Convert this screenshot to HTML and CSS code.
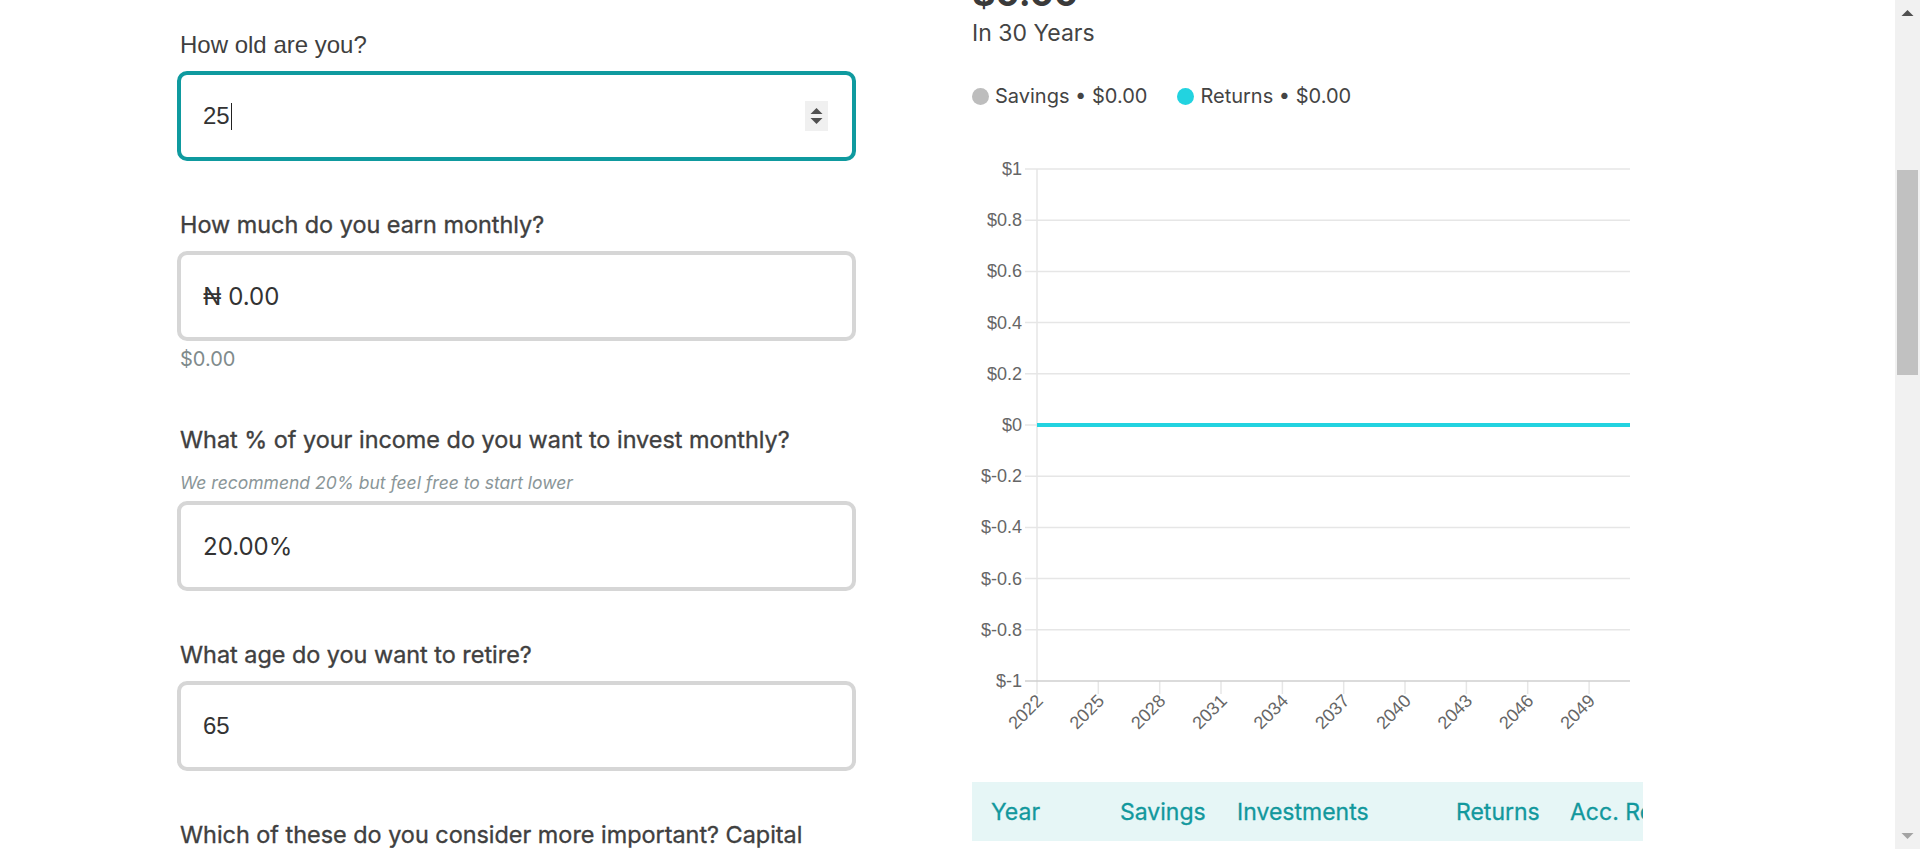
FILE: index.html
```html
<!DOCTYPE html>
<html lang="en">
<head>
<meta charset="utf-8">
<title>Investment Calculator</title>
<link rel="stylesheet" href="styles.css">
</head>
<body>
<div class="window">
  <div class="viewport">
    <main class="calc">
      <section class="form">
        <div class="group">
          <div class="label label-arial">How old are you?</div>
          <div class="field field-focus">
            <span class="value value-arial">25</span><span class="caret"></span>
            <span class="spinner">
              <svg width="23" height="30" viewBox="0 0 23 30"><path d="M5.5 13 L11.5 7 L17.5 13 Z" fill="#505050"/><path d="M5.5 17 L11.5 23 L17.5 17 Z" fill="#505050"/></svg>
            </span>
          </div>
        </div>
        <div class="group">
          <div class="label">How much do you earn monthly?</div>
          <div class="field"><span class="value">₦ 0.00</span></div>
          <div class="helper">$0.00</div>
        </div>
        <div class="group">
          <div class="label">What % of your income do you want to invest monthly?</div>
          <div class="hint">We recommend 20% but feel free to start lower</div>
          <div class="field"><span class="value">20.00%</span></div>
        </div>
        <div class="group">
          <div class="label">What age do you want to retire?</div>
          <div class="field"><span class="value value-arial">65</span></div>
        </div>
        <div class="group">
          <div class="label">Which of these do you consider more important? Capital</div>
        </div>
      </section>

      <section class="results">
        <div class="total">$0.00</div>
        <div class="period">In 30 Years</div>
        <div class="legend">
          <span class="legend-item"><span class="dot dot-savings"></span>Savings • $0.00</span>
          <span class="legend-item"><span class="dot dot-returns"></span>Returns • $0.00</span>
        </div>
        <svg class="chart" width="671" height="600" viewBox="0 0 671 600">
          <g stroke="#e6e6e6" stroke-width="1.5">
            <line x1="53" y1="29" x2="658" y2="29"/>
            <line x1="53" y1="80.2" x2="658" y2="80.2"/>
            <line x1="53" y1="131.4" x2="658" y2="131.4"/>
            <line x1="53" y1="182.6" x2="658" y2="182.6"/>
            <line x1="53" y1="233.8" x2="658" y2="233.8"/>
            <line x1="53" y1="285" x2="658" y2="285"/>
            <line x1="53" y1="336.2" x2="658" y2="336.2"/>
            <line x1="53" y1="387.4" x2="658" y2="387.4"/>
            <line x1="53" y1="438.6" x2="658" y2="438.6"/>
            <line x1="53" y1="489.8" x2="658" y2="489.8"/>
            <line x1="65" y1="29" x2="65" y2="554"/>
            <line x1="126.3" y1="541" x2="126.3" y2="554"/>
            <line x1="187.7" y1="541" x2="187.7" y2="554"/>
            <line x1="249" y1="541" x2="249" y2="554"/>
            <line x1="310.4" y1="541" x2="310.4" y2="554"/>
            <line x1="371.7" y1="541" x2="371.7" y2="554"/>
            <line x1="433" y1="541" x2="433" y2="554"/>
            <line x1="494.4" y1="541" x2="494.4" y2="554"/>
            <line x1="555.7" y1="541" x2="555.7" y2="554"/>
            <line x1="617.1" y1="541" x2="617.1" y2="554"/>
          </g>
          <line x1="53" y1="541" x2="658" y2="541" stroke="#cfcfcf" stroke-width="1.5"/>
          <line x1="65" y1="285" x2="658" y2="285" stroke="#22d3e0" stroke-width="4"/>
          <g class="ylabels" text-anchor="end">
            <text x="50" y="35">$1</text>
            <text x="50" y="86.2">$0.8</text>
            <text x="50" y="137.4">$0.6</text>
            <text x="50" y="188.6">$0.4</text>
            <text x="50" y="239.8">$0.2</text>
            <text x="50" y="291">$0</text>
            <text x="50" y="342.2">$-0.2</text>
            <text x="50" y="393.4">$-0.4</text>
            <text x="50" y="444.6">$-0.6</text>
            <text x="50" y="495.8">$-0.8</text>
            <text x="50" y="547">$-1</text>
          </g>
          <g class="xlabels" text-anchor="end">
            <text transform="translate(72 562) rotate(-45)">2022</text>
            <text transform="translate(133.3 562) rotate(-45)">2025</text>
            <text transform="translate(194.7 562) rotate(-45)">2028</text>
            <text transform="translate(256 562) rotate(-45)">2031</text>
            <text transform="translate(317.4 562) rotate(-45)">2034</text>
            <text transform="translate(378.7 562) rotate(-45)">2037</text>
            <text transform="translate(440 562) rotate(-45)">2040</text>
            <text transform="translate(501.4 562) rotate(-45)">2043</text>
            <text transform="translate(562.7 562) rotate(-45)">2046</text>
            <text transform="translate(624.1 562) rotate(-45)">2049</text>
          </g>
        </svg>
        <div class="table-wrap">
          <table class="breakdown">
            <thead>
              <tr>
                <th class="c-year">Year</th>
                <th class="c-sav">Savings</th>
                <th class="c-inv">Investments</th>
                <th class="c-ret">Returns</th>
                <th class="c-acc">Acc. Returns</th>
              </tr>
            </thead>
          </table>
        </div>
      </section>
    </main>
  </div>
  <div class="scrollbar">
    <div class="sb-btn">
      <svg width="25" height="25" viewBox="0 0 25 25"><path d="M6.5 16 L12.5 10 L18.5 16 Z" fill="#505050"/></svg>
    </div>
    <div class="sb-track"><div class="sb-thumb"></div></div>
    <div class="sb-btn">
      <svg width="25" height="25" viewBox="0 0 25 25"><path d="M6.5 9 L12.5 15 L18.5 9 Z" fill="#a3a3a3"/></svg>
    </div>
  </div>
</div>
</body>
</html>
```
FILE: styles.css
```css
* { box-sizing: border-box; }
html, body {
  margin: 0;
  padding: 0;
  height: 849px;
  overflow: hidden;
  background: #ffffff;
}
body {
  font-family: "Inter", "Liberation Sans", sans-serif;
  color: #404040;
}
.window {
  display: flex;
  height: 849px;
}
.viewport {
  flex: 1;
  overflow: hidden;
}
.calc {
  display: flex;
  gap: 116px;
  padding-left: 177px;
}
.form {
  width: 679px;
  flex: none;
  padding-top: 29px;
  display: flex;
  flex-direction: column;
}
.group {
  display: flex;
  flex-direction: column;
  margin-bottom: 48px;
}
.label {
  font-size: 23.4px;
  line-height: 32px;
  font-weight: 400;
  color: #404040;
  -webkit-text-stroke: 0.35px #404040;
  margin: 0 0 10px 3px;
  white-space: nowrap;
}
.label-arial {
  font-family: "Liberation Sans", Arial, sans-serif;
  font-size: 24px;
  -webkit-text-stroke: 0;
  color: #3f3f3f;
}
.field {
  height: 90px;
  border: 4px solid #d6d6d6;
  border-radius: 10px;
  display: flex;
  align-items: center;
  padding: 0 24px 0 22px;
  background: #fff;
}
.field-focus {
  border-color: #0f9a9f;
}
.value {
  font-size: 24px;
  color: #333;
}
.value-arial {
  font-family: "Liberation Sans", Arial, sans-serif;
}
.caret {
  width: 1px;
  height: 27px;
  background: #222;
  margin-left: 1px;
}
.spinner {
  margin-left: auto;
  width: 23px;
  height: 30px;
  background: #f0f0f0;
  display: flex;
}
.helper {
  font-size: 20px;
  line-height: 24px;
  color: #7f8b8c;
  margin: 6px 0 5px 3px;
}
.hint {
  font-size: 17.5px;
  line-height: 24px;
  font-style: italic;
  color: #8a9698;
  margin: 5px 0 6px 3px;
}
.results {
  width: 671px;
  flex: none;
}
.total {
  font-size: 36px;
  line-height: 44px;
  font-weight: 700;
  color: #3a3a3a;
  margin-top: -29px;
}
.period {
  font-size: 23px;
  line-height: 30px;
  color: #444;
  margin-top: 3px;
}
.legend {
  display: flex;
  gap: 30px;
  margin-top: 34px;
  font-size: 20px;
  line-height: 28px;
  color: #444;
}
.legend-item {
  display: flex;
  align-items: center;
  gap: 6px;
}
.dot {
  width: 17px;
  height: 17px;
  border-radius: 50%;
  display: inline-block;
}
.dot-savings { background: #bdbdbd; }
.dot-returns { background: #22d3e0; }
.chart {
  display: block;
  margin-top: 30px;
}
.chart text {
  font-family: "Liberation Sans", Arial, sans-serif;
  font-size: 18px;
  fill: #666;
}
.table-wrap {
  margin-top: 42px;
  overflow: hidden;
  background: #e6f6f6;
}
.breakdown {
  border-collapse: collapse;
  table-layout: fixed;
  width: 800px;
}
.breakdown th {
  height: 59px;
  padding: 0 19px;
  text-align: left;
  font-size: 23px;
  font-weight: 400;
  color: #12989d;
  -webkit-text-stroke: 0.3px #12989d;
  white-space: nowrap;
}
.c-year { width: 129px; }
.c-sav { width: 117px; }
.c-inv { width: 219px; }
.c-ret { width: 114px; }
.c-acc { width: 221px; }
.scrollbar {
  width: 25px;
  flex: none;
  background: #f1f1f1;
  display: flex;
  flex-direction: column;
}
.sb-btn {
  height: 25px;
  flex: none;
}
.sb-btn svg { display: block; }
.sb-track {
  flex: 1;
  padding: 145px 2px 0 2px;
}
.sb-thumb {
  height: 205px;
  background: #c1c1c1;
}
```
